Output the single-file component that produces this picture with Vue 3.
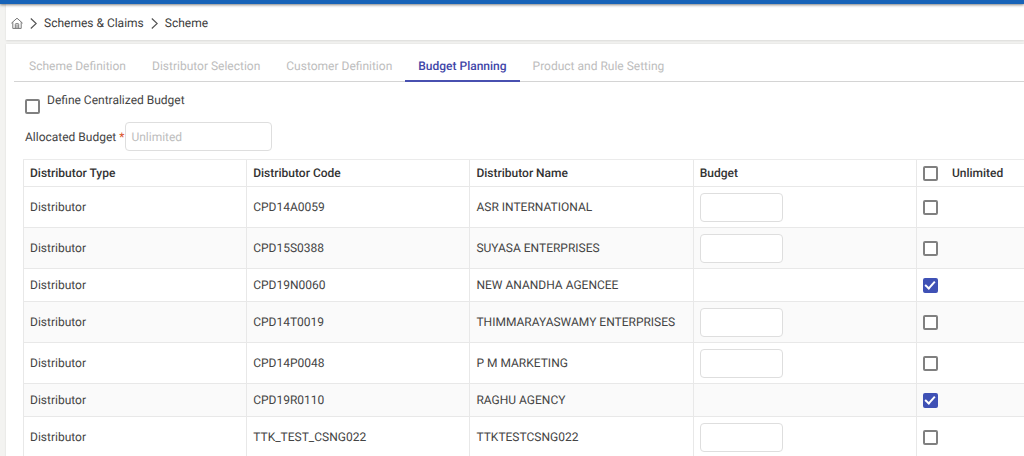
<script setup>
import { reactive, ref } from 'vue'

const tabs = ['Scheme Definition', 'Distributor Selection', 'Customer Definition', 'Budget Planning', 'Product and Rule Setting']
const active = ref('Budget Planning')
const centralized = ref(false)
const allUnlimited = ref(false)

const rows = reactive([
  { code: 'CPD14A0059', name: 'ASR INTERNATIONAL', budget: '', unlimited: false },
  { code: 'CPD15S0388', name: 'SUYASA ENTERPRISES', budget: '', unlimited: false },
  { code: 'CPD19N0060', name: 'NEW ANANDHA AGENCEE', budget: '', unlimited: true },
  { code: 'CPD14T0019', name: 'THIMMARAYASWAMY ENTERPRISES', budget: '', unlimited: false },
  { code: 'CPD14P0048', name: 'P M MARKETING', budget: '', unlimited: false },
  { code: 'CPD19R0110', name: 'RAGHU AGENCY', budget: '', unlimited: true },
  { code: 'TTK_TEST_CSNG022', name: 'TTKTESTCSNG022', budget: '', unlimited: false },
])
</script>

<template>
  <div class="page">
    <header class="topbar"></header>
    <nav class="crumbs" aria-label="Breadcrumb">
      <a href="#" class="home" aria-label="Home">
        <svg width="12" height="12" viewBox="0 0 12 12" fill="none" stroke="#777" stroke-width="1">
          <path d="M0.4 6.2 L6 1.2 L11.6 6.2 M1.8 5.2 V11.4 H10.2 V5.2 M4.3 11.4 V7.4 Q4.3 6.6 5.1 6.6 H6.9 Q7.7 6.6 7.7 7.4 V11.4 M6 7.4 V11" />
        </svg>
      </a>
      <svg class="chevron" width="7" height="11" viewBox="0 0 7 11" fill="none" stroke="#555" stroke-width="1.2"><path d="M0.8 0.5 L6.2 5.5 L0.8 10.5" /></svg>
      <a href="#">Schemes &amp; Claims</a>
      <svg class="chevron" width="7" height="11" viewBox="0 0 7 11" fill="none" stroke="#555" stroke-width="1.2"><path d="M0.8 0.5 L6.2 5.5 L0.8 10.5" /></svg>
      <a href="#">Scheme</a>
    </nav>
    <main class="panel">
      <div class="tabs" role="tablist">
        <button
          v-for="tab in tabs"
          :key="tab"
          type="button"
          role="tab"
          class="tab"
          :class="{ active: tab === active }"
          :aria-selected="tab === active"
          @click="active = tab"
        >{{ tab }}</button>
      </div>
      <div class="content">
        <div class="central">
          <input id="central" v-model="centralized" type="checkbox" class="check" />
          <label for="central">Define Centralized Budget</label>
        </div>
        <div class="allocated">
          <label for="allocated">Allocated Budget <span class="required">*</span></label>
          <input id="allocated" type="text" class="field wide" placeholder="Unlimited" />
        </div>
        <table>
          <colgroup>
            <col class="data" /><col class="data" /><col class="data" /><col class="data" /><col />
          </colgroup>
          <thead>
            <tr>
              <th>Distributor Type</th>
              <th>Distributor Code</th>
              <th>Distributor Name</th>
              <th>Budget</th>
              <th>
                <div class="all">
                  <input id="all" v-model="allUnlimited" type="checkbox" class="check" />
                  <label for="all">Unlimited</label>
                </div>
              </th>
            </tr>
          </thead>
          <tbody>
            <tr v-for="row in rows" :key="row.code" :class="{ compact: row.unlimited }">
              <td>Distributor</td>
              <td>{{ row.code }}</td>
              <td>{{ row.name }}</td>
              <td><input v-if="!row.unlimited" v-model="row.budget" type="text" class="field" :aria-label="'Budget for ' + row.name" /></td>
              <td><input v-model="row.unlimited" type="checkbox" class="check" :aria-label="'Unlimited budget for ' + row.name" /></td>
            </tr>
          </tbody>
        </table>
      </div>
    </main>
  </div>
</template>

<style>
body {
  background: #f3f3f1;
  overflow-x: hidden;
}
body::-webkit-scrollbar {
  display: none;
}
</style>

<style scoped>
.page {
  font-family: Roboto, "Liberation Sans", sans-serif;
  font-size: 12px;
  line-height: 16px;
  color: #444;
  text-rendering: geometricPrecision;
}
.topbar {
  height: 4px;
  background: #1763b8;
  box-shadow: 0 1px 3px rgba(0, 0, 0, 0.5);
  position: relative;
}
.crumbs {
  display: flex;
  align-items: center;
  height: 32px;
  margin-left: 6px;
  padding: 3px 5px 1px;
  background: #fff;
  box-shadow: 0 1px 2px rgba(0, 0, 0, 0.1);
}
.crumbs a {
  color: #3c3c3c;
  text-decoration: none;
}
.home {
  display: flex;
}
.chevron {
  margin: 0 7px;
}
.panel {
  margin: 4px 0 0 6px;
  background: #fff;
  box-shadow: 0 0 2px rgba(0, 0, 0, 0.1);
}
.tabs {
  display: flex;
  margin-left: 8px;
  padding: 6px 0 0 2px;
  box-shadow: inset 0 -1px 0 #d4d4d4;
}
.tab {
  height: 32px;
  padding: 1px 13px 0;
  border: 0;
  border-bottom: 2px solid transparent;
  background: none;
  font: inherit;
  text-rendering: inherit;
  color: #bdbdbd;
  white-space: nowrap;
}
.tab.active {
  font-weight: 500;
  color: #3f46a8;
  border-bottom-color: #4850b0;
}
.content {
  padding: 10px 0 0 17px;
}
.central {
  display: flex;
  align-items: flex-end;
  gap: 7px;
  height: 22px;
  padding-left: 2px;
}
.central label {
  align-self: flex-start;
}
.allocated {
  display: flex;
  align-items: center;
  gap: 1px;
  margin: 8px 0;
  padding-left: 2px;
}
.required {
  color: #d9532c;
}
.field {
  box-sizing: border-box;
  display: block;
  width: 83px;
  height: 29px;
  padding: 0 5px;
  border: 1px solid #dedede;
  border-radius: 4px;
  background: #fff;
  font: inherit;
  text-rendering: inherit;
}
.field.wide {
  width: 147px;
}
.field::placeholder {
  color: #bdbdbd;
}
.check {
  appearance: none;
  box-sizing: border-box;
  display: block;
  flex: none;
  width: 15px;
  height: 15px;
  margin: 0;
  border: 2px solid #808080;
  border-radius: 2px;
  background: #fff;
}
.check:checked {
  border-color: #3f51b5;
  background: #3f51b5;
}
.check:checked::after {
  content: "";
  display: block;
  box-sizing: border-box;
  width: 6px;
  height: 10px;
  margin: -1px auto 0;
  border: solid #fff;
  border-width: 0 2px 2px 0;
  transform: rotate(42deg);
}
table {
  width: 100%;
  table-layout: fixed;
  border-collapse: separate;
  border-spacing: 0;
  border-top: 1px solid #ebebeb;
}
.data {
  width: 22.3%;
}
th,
td {
  box-sizing: border-box;
  height: 41px;
  padding: 0 6px;
  border-left: 1px solid #e8e8e8;
  border-bottom: 1px solid #e8e8e8;
  text-align: left;
  vertical-align: middle;
  white-space: nowrap;
}
th {
  height: 27px;
  font-weight: 500;
  color: #333;
}
.compact td {
  height: 33px;
}
tbody tr:nth-child(even) {
  background: #fafafa;
}
.all {
  display: flex;
  align-items: center;
  gap: 14px;
}
</style>
